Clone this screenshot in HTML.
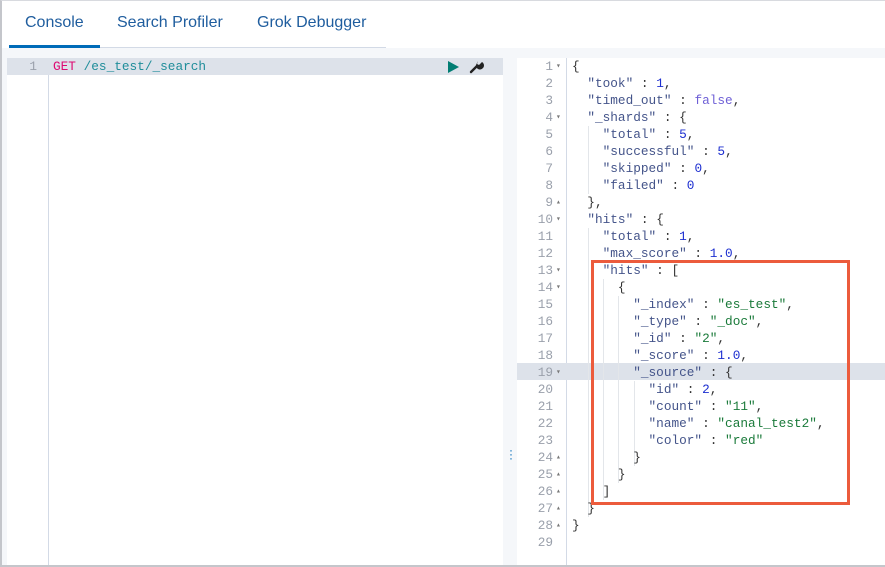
<!DOCTYPE html>
<html><head><meta charset="utf-8"><style>
*{margin:0;padding:0;box-sizing:border-box}
body{width:885px;height:567px;background:#fff;position:relative;overflow:hidden;font-family:"Liberation Sans",sans-serif}
.frame{position:absolute;left:0;top:0;width:885px;height:567px;border-left:2px solid #c4c6cb;border-bottom:2px solid #c4c6cb;border-top:1px solid #d8dadf}
.tab{position:absolute;top:14px;font-size:16px;color:#1f5d9e}
.tabline{position:absolute;left:9px;top:47px;width:377px;height:1px;background:#d3dae6}
.ul{position:absolute;left:9px;top:45px;width:91px;height:3px;background:#006bb8}
.bar{position:absolute;left:2px;top:48px;width:883px;height:10px;background:#f5f7fa}
.mono{font-family:"Liberation Mono",monospace;font-size:12.75px;line-height:17px;white-space:pre}
.ln{position:absolute;color:#9aa0ab;text-align:right;width:30px}
.k{color:#44548a}.s{color:#1a7a3a}.n{color:#1d2fd0}.b{color:#6e5fd6}.p{color:#333}
.g{position:absolute;width:1px;background:#e3e6ea}
</style></head><body>
<div class="frame"></div>
<div class="tab" style="left:25px">Console</div>
<div class="tab" style="left:117px">Search Profiler</div>
<div class="tab" style="left:257px">Grok Debugger</div>
<div class="tabline"></div><div class="ul"></div>
<div class="bar"></div>
<div style="position:absolute;left:2px;top:58px;width:5px;height:507px;background:#f5f7fa"></div>
<div style="position:absolute;left:48px;top:58px;width:1px;height:507px;background:#d3dae6"></div>
<div style="position:absolute;left:7px;top:58px;width:496px;height:17px;background:#dde2ea"></div>
<div class="mono ln" style="left:7px;top:58px">1</div>
<div class="mono" style="position:absolute;left:53px;top:58px"><span style="color:#dd0a73">GET</span> <span style="color:#1f8d9a">/es_test/_search</span></div>
<svg style="position:absolute;left:446px;top:60px" width="14" height="14"><path d="M2 1 L13 7 L2 13Z" fill="#017d73"/></svg>
<svg style="position:absolute;left:469px;top:59px" width="15" height="15"><path d="M2 13 L8 7" stroke="#222" stroke-width="2.4" stroke-linecap="round"/><path d="M7 6 A4 4 0 1 0 13 3 L10 6 L8 5 L9 2 Z" fill="#222"/></svg>
<div style="position:absolute;left:503px;top:58px;width:14px;height:507px;background:#f5f7fa"></div>
<div style="position:absolute;left:509px;top:448px;color:#006bb8;font-size:12px;line-height:4px">·<br>·<br>·</div>
<div style="position:absolute;left:566px;top:58px;width:1px;height:507px;background:#d3dae6"></div>
<div style="position:absolute;left:517px;top:363px;width:368px;height:17px;background:#dde2ea"></div>
<div class="g" style="left:588px;top:126px;height:68px"></div>
<div class="g" style="left:588px;top:228px;height:289px"></div>
<div class="g" style="left:603px;top:279px;height:221px"></div>
<div class="g" style="left:618px;top:296px;height:187px"></div>
<div class="g" style="left:634px;top:381px;height:85px"></div>
<div class="mono" style="position:absolute;left:517px;top:58px;width:50px;color:#9aa0ab;text-align:right;padding-right:14px">1<br>2<br>3<br>4<br>5<br>6<br>7<br>8<br>9<br>10<br>11<br>12<br>13<br>14<br>15<br>16<br>17<br>18<br>19<br>20<br>21<br>22<br>23<br>24<br>25<br>26<br>27<br>28<br>29</div>
<div class="mono" style="position:absolute;left:556px;top:58px;font-size:8px;color:#777">▾<br><br><br>▾<br><br><br><br><br>▴<br>▾<br><br><br>▾<br>▾<br><br><br><br><br>▾<br><br><br><br><br>▴<br>▴<br>▴<br>▴<br>▴</div>
<div class="mono p" style="position:absolute;left:572px;top:58px">{
  <span class="k">"took"</span> : <span class="n">1</span>,
  <span class="k">"timed_out"</span> : <span class="b">false</span>,
  <span class="k">"_shards"</span> : {
    <span class="k">"total"</span> : <span class="n">5</span>,
    <span class="k">"successful"</span> : <span class="n">5</span>,
    <span class="k">"skipped"</span> : <span class="n">0</span>,
    <span class="k">"failed"</span> : <span class="n">0</span>
  },
  <span class="k">"hits"</span> : {
    <span class="k">"total"</span> : <span class="n">1</span>,
    <span class="k">"max_score"</span> : <span class="n">1.0</span>,
    <span class="k">"hits"</span> : [
      {
        <span class="k">"_index"</span> : <span class="s">"es_test"</span>,
        <span class="k">"_type"</span> : <span class="s">"_doc"</span>,
        <span class="k">"_id"</span> : <span class="s">"2"</span>,
        <span class="k">"_score"</span> : <span class="n">1.0</span>,
        <span class="k">"_source"</span> : {
          <span class="k">"id"</span> : <span class="n">2</span>,
          <span class="k">"count"</span> : <span class="s">"11"</span>,
          <span class="k">"name"</span> : <span class="s">"canal_test2"</span>,
          <span class="k">"color"</span> : <span class="s">"red"</span>
        }
      }
    ]
  }
}
</div>
<div style="position:absolute;left:591px;top:260px;width:259px;height:245px;border:3px solid #ec5b3c"></div>
</body></html>
